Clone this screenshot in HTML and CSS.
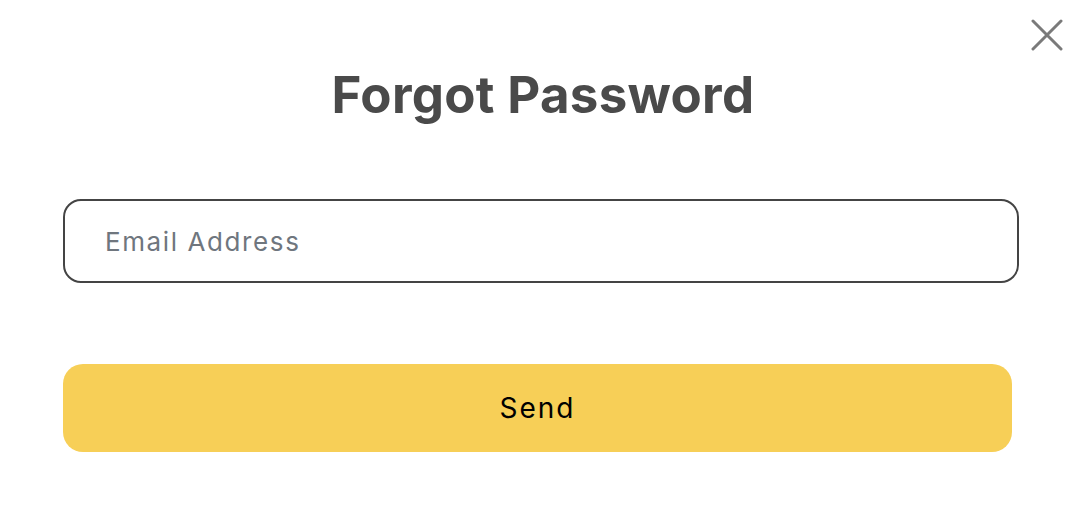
FILE: index.html
```html
<!DOCTYPE html>
<html>
<head>
    <title>Forgot Password</title>
    <link rel="stylesheet" href="styles.css">
</head>
<body>
    <div class="modal">
        <button type="button" class="close-btn" aria-label="Close">
            <svg width="32" height="32" viewBox="0 0 32 32">
                <path d="M2 2 L30 30 M30 2 L2 30" stroke="#7a7a7a" stroke-width="3" stroke-linecap="round" fill="none"/>
            </svg>
        </button>
        <h2>Forgot Password</h2>
        <form id="forgotForm">
            <div class="form-group">
                <input type="email" id="email" placeholder="Email Address">
            </div>
            <button type="submit" class="send-btn">Send</button>
        </form>
    </div>
</body>
</html>
```

FILE: styles.css
```css
* {
    margin: 0;
    padding: 0;
    box-sizing: border-box;
    font-family: 'Inter', sans-serif;
}

body {
    background-color: #fff;
    width: 1078px;
    height: 518px;
    overflow: hidden;
}

.modal {
    position: relative;
    padding: 65px 59px 0 63px;
}

.close-btn {
    position: absolute;
    top: 19px;
    right: 15px;
    width: 32px;
    height: 32px;
    background: none;
    border: none;
    cursor: pointer;
    display: flex;
}

h2 {
    color: #4a4a4a;
    font-size: 51px;
    font-weight: 700;
    line-height: 60px;
    text-align: center;
    letter-spacing: 0.3px;
    margin-bottom: 74px;
    padding-left: 4px;
}

.form-group {
    margin-bottom: 81px;
}

.form-group input {
    width: 956px;
    height: 84px;
    padding: 0 40px;
    border: 2px solid #444;
    border-radius: 18px;
    font-size: 26px;
    letter-spacing: 1.6px;
    color: #333;
    background: #fff;
}

.form-group input::placeholder {
    color: #6f767e;
}

.form-group input:focus {
    outline: none;
}

.send-btn {
    width: 949px;
    height: 88px;
    background: #f7cf57;
    color: #000;
    border: none;
    border-radius: 20px;
    font-size: 28px;
    font-weight: 400;
    letter-spacing: 2px;
    cursor: pointer;
}
```
